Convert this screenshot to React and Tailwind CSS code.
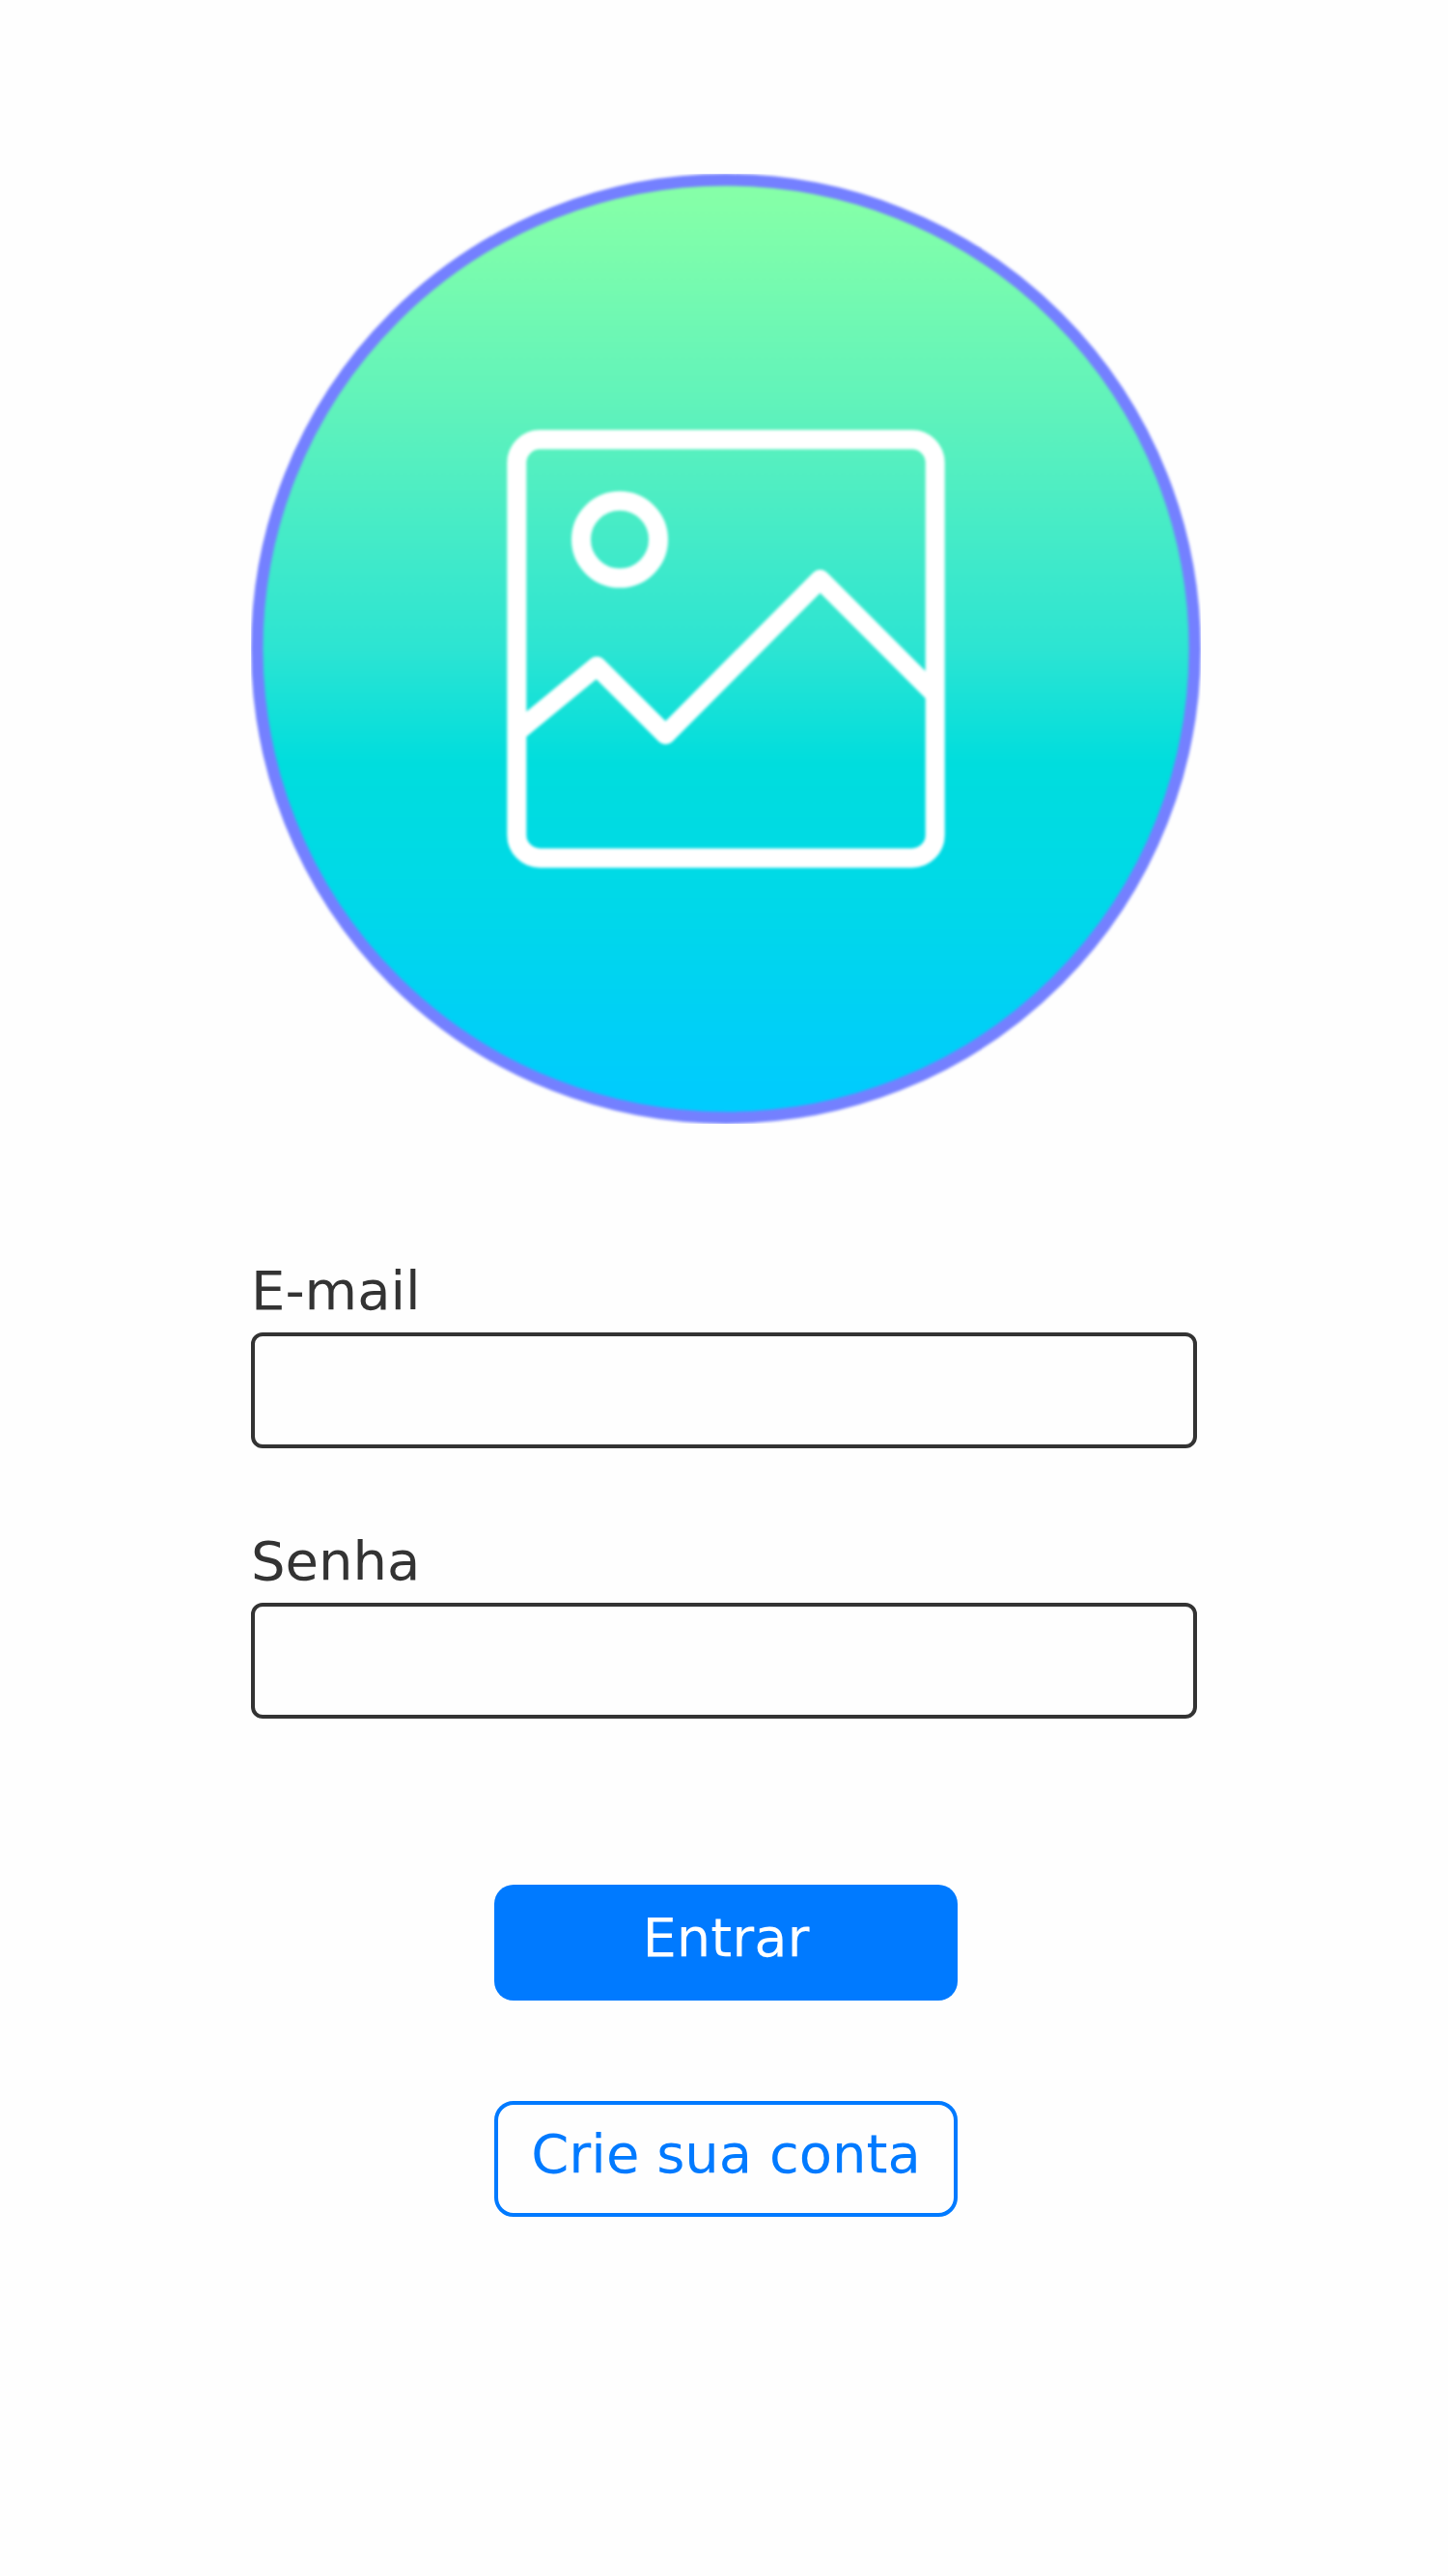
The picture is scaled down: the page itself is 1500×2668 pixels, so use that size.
function PictureLogo() {
  return (
    <svg viewBox="0 0 984 984" className="ml-[260px] block h-[984px] w-[984px] overflow-hidden" role="img" aria-label="Logo">
      <defs>
        <linearGradient id="fill" x1="0" y1="0" x2="0" y2="984" gradientUnits="userSpaceOnUse">
          <stop offset="0" stopColor="#86ffa8" />
          <stop offset="0.03" stopColor="#84ffa8" />
          <stop offset="0.25" stopColor="#5ff2bb" />
          <stop offset="0.5" stopColor="#2ce4d2" />
          <stop offset="0.62" stopColor="#00dddd" />
          <stop offset="0.75" stopColor="#00d9e7" />
          <stop offset="0.96" stopColor="#00ccfc" />
          <stop offset="1" stopColor="#00ccff" />
        </linearGradient>
        <filter id="soft" x="-5%" y="-5%" width="110%" height="110%" colorInterpolationFilters="sRGB">
          <feGaussianBlur stdDeviation="1.5" />
        </filter>
      </defs>
      <circle cx="492" cy="492" r="485.7" fill="url(#fill)" stroke="#7480ff" strokeWidth="12.4" filter="url(#soft)" />
      <g fill="none" stroke="#fff" strokeWidth="20" strokeLinejoin="round" filter="url(#soft)">
        <rect x="275.3" y="275.3" width="433.4" height="433.4" rx="24" />
        <circle cx="382" cy="378.8" r="40" />
        <path d="M275 578.5 358.3 510 429.5 581 589.6 420 709 539.5" />
      </g>
    </svg>
  );
}

function Field({ label, type }) {
  return (
    <label className="block">
      <span className="block leading-[64px]">{label}</span>
      <input type={type} className="mt-[11px] block h-[120px] w-[980px] rounded-xl border-4 border-[#333] bg-transparent px-5 outline-none" />
    </label>
  );
}

export default function App() {
  return (
    <main className="min-h-[2668px] w-[1500px] bg-[#fefefe] pt-[180px] font-['DejaVu_Sans',sans-serif] text-[56px] text-[#333]">
      <PictureLogo />
      <form className="pt-[141px]" onSubmit={(e) => e.preventDefault()}>
        <div className="flex flex-col gap-[85px] pl-[260px]">
          <Field label="E-mail" type="email" />
          <Field label="Senha" type="password" />
        </div>
        <div className="ml-[512px] mt-[172px] flex w-[480px] flex-col gap-[104px]">
          <button type="submit" className="h-[120px] rounded-[20px] bg-[#007aff] pb-[10px] leading-[64px] whitespace-nowrap text-white">
            Entrar
          </button>
          <button type="button" className="h-[120px] rounded-[20px] border-4 border-[#007aff] pb-[10px] leading-[64px] whitespace-nowrap text-[#007aff]">
            Crie sua conta
          </button>
        </div>
      </form>
    </main>
  );
}
